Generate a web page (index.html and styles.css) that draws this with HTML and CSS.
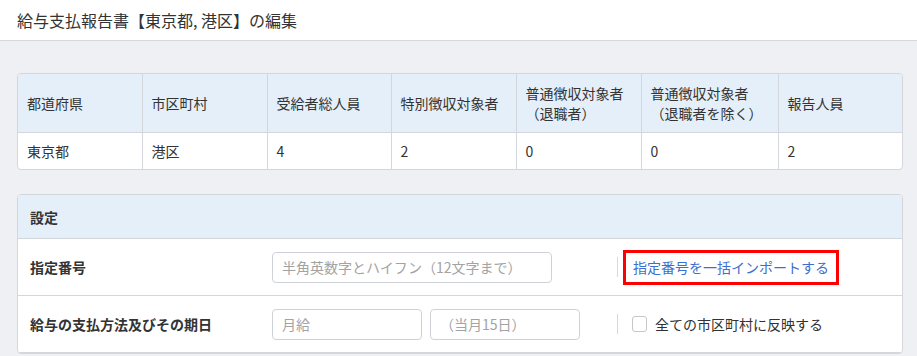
FILE: index.html
```html
<!DOCTYPE html>
<html lang="ja">
<head>
    <meta charset="UTF-8">
    <title>給与支払報告書の編集</title>
    <link rel="stylesheet" href="styles.css">
</head>
<body>
    <header class="page-header">
        <h1>給与支払報告書【東京都, 港区】の編集</h1>
    </header>
    <main class="content">
        <div class="card">
            <table class="summary">
                <thead>
                    <tr>
                        <th class="c1">都道府県</th>
                        <th class="c2">市区町村</th>
                        <th class="c3">受給者総人員</th>
                        <th class="c4">特別徴収対象者</th>
                        <th class="c5">普通徴収対象者<br>（退職者）</th>
                        <th class="c6">普通徴収対象者<br>（退職者を除く）</th>
                        <th class="c7">報告人員</th>
                    </tr>
                </thead>
                <tbody>
                    <tr>
                        <td>東京都</td>
                        <td>港区</td>
                        <td>4</td>
                        <td>2</td>
                        <td>0</td>
                        <td>0</td>
                        <td>2</td>
                    </tr>
                </tbody>
            </table>
        </div>

        <div class="card settings">
            <div class="settings-head">設定</div>
            <div class="setting-row">
                <div class="label">指定番号</div>
                <div class="fields">
                    <input class="input wide" type="text" placeholder="半角英数字とハイフン（12文字まで）">
                </div>
                <div class="extra">
                    <a class="import-link" href="#">指定番号を一括インポートする</a>
                </div>
            </div>
            <div class="setting-row">
                <div class="label">給与の支払方法及びその期日</div>
                <div class="fields">
                    <input class="input short" type="text" placeholder="月給">
                    <input class="input short" type="text" placeholder="（当月15日）">
                </div>
                <div class="extra">
                    <label class="check">
                        <input type="checkbox">
                        <span class="box"></span>
                        全ての市区町村に反映する
                    </label>
                </div>
            </div>
        </div>
    </main>
</body>
</html>
```

FILE: styles.css
```css
* {
    margin: 0;
    padding: 0;
    box-sizing: border-box;
}
body {
    font-family: "Noto Sans CJK JP", "Noto Sans", sans-serif;
    background: #eff0f3;
    color: #333;
    font-size: 14px;
    overflow: hidden;
}
.page-header {
    background: #fff;
    height: 41px;
    border-bottom: 1px solid #d6d8dc;
    padding: 0 17px;
    display: flex;
    align-items: center;
}
.page-header h1 {
    font-size: 16px;
    font-weight: normal;
    color: #333;
}
.content {
    padding: 32px 14px 0 17px;
}
.card {
    background: #fff;
    border: 1px solid #d3d6db;
    border-radius: 4px;
    overflow: hidden;
    margin-bottom: 24px;
}

/* summary table */
.summary {
    width: 100%;
    border-collapse: collapse;
    table-layout: fixed;
}
.summary th,
.summary td {
    text-align: left;
    font-weight: normal;
    padding: 0 9px;
    border-right: 1px solid #d3d6db;
    line-height: 20px;
}
.summary th:last-child,
.summary td:last-child {
    border-right: none;
}
.summary th {
    background: #e5eff9;
    height: 58px;
    border-bottom: 1px solid #d3d6db;
}
.summary td {
    height: 37px;
}
.c1, .c3 { width: 124px; }
.c2, .c4, .c5 { width: 125px; }
.c6 { width: 137px; }

/* settings */
.settings-head {
    background: #e5eff9;
    height: 44px;
    padding: 0 12px;
    display: flex;
    align-items: center;
    font-weight: bold;
    border-bottom: 1px solid #d3d6db;
}
.setting-row {
    display: flex;
    align-items: center;
    height: 57px;
    border-bottom: 1px solid #d3d6db;
}
.label {
    width: 254px;
    padding-left: 12px;
    font-weight: bold;
}
.fields {
    display: flex;
    gap: 8px;
    width: 345px;
}
.input {
    height: 31px;
    border: 1px solid #cfd3d8;
    border-radius: 4px;
    padding: 0 9px;
    font-family: inherit;
    font-size: 14px;
    color: #333;
    background: #fff;
}
.input::placeholder {
    color: #a3a3a3;
}
.input.wide { width: 280px; }
.input.short { width: 150px; }
.extra {
    border-left: 1px solid #d6d8dc;
    height: 20px;
    display: flex;
    align-items: center;
    padding-left: 5px;
}
.import-link {
    display: block;
    border: 3px solid #f00;
    padding: 3px 7px 4px 7px;
    color: #3c6fcf;
    text-decoration: none;
    line-height: 22px;
}
.check {
    display: flex;
    align-items: center;
    gap: 8px;
    padding-left: 9px;
    cursor: pointer;
}
.check input {
    display: none;
}
.check .box {
    width: 15px;
    height: 16px;
    border: 1px solid #c3c7cc;
    border-radius: 3px;
    background: #fff;
}
```
